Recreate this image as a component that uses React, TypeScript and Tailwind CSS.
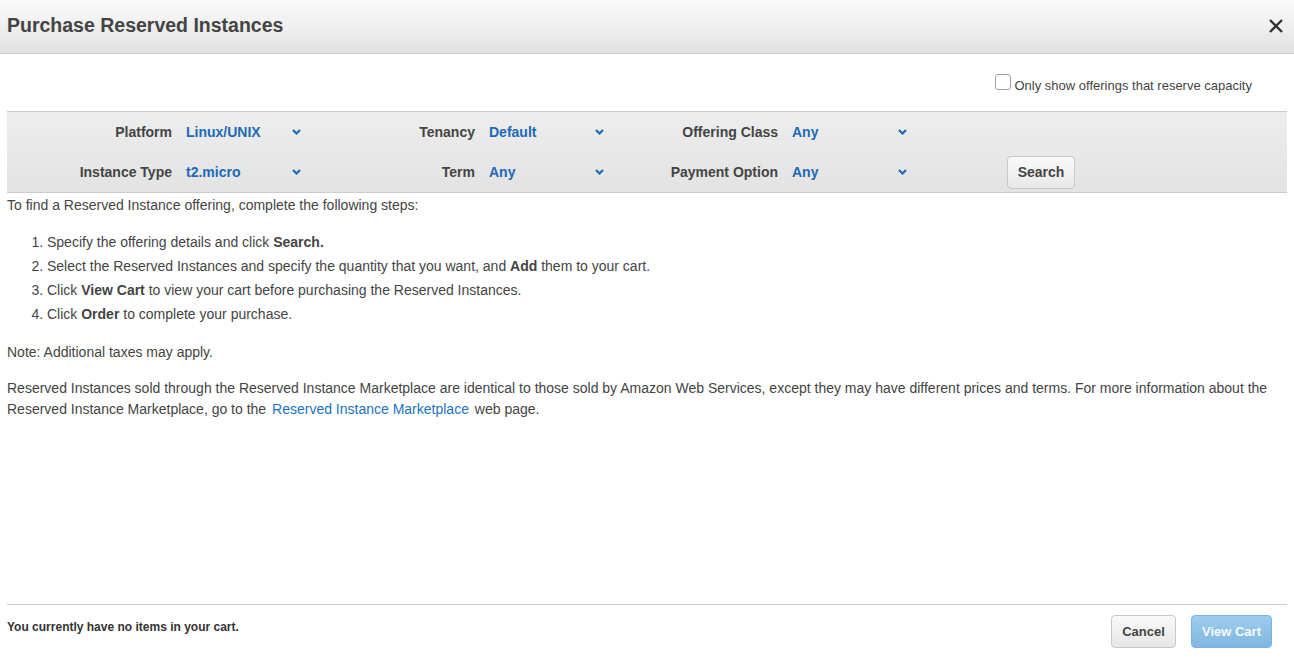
import React from "react";

function Chevron() {
  return (
    <svg width="9" height="6" viewBox="0 0 9 6" className="shrink-0">
      <polyline points="1,1 4.5,4.5 8,1" fill="none" stroke="#1a6ab8" strokeWidth="2.2" />
    </svg>
  );
}

function Field({ label, value }: { label: string; value: string }) {
  return (
    <div className="w-[303px] flex items-center shrink-0">
      <div className="w-[165px] text-right font-bold text-[#444]">{label}</div>
      <div className="ml-[14px] w-[115px] flex items-center justify-between">
        <span className="font-bold text-[#1a6ab8]">{value}</span>
        <Chevron />
      </div>
    </div>
  );
}

export default function App() {
  return (
    <div className="w-[1294px] h-[661px] bg-white flex flex-col font-['Liberation_Sans',Arial,sans-serif] text-[14px] text-[#444] overflow-hidden">
      <div className="h-[54px] shrink-0 border-b border-[#cfcfcf] bg-gradient-to-b from-[#fbfbfb] to-[#e2e2e2] flex items-center justify-between pl-[7px] pr-[10px]">
        <h1 className="text-[19.5px] font-bold text-[#444] leading-none mb-[1px]">Purchase Reserved Instances</h1>
        <svg width="16" height="16" viewBox="0 0 16 16" className="mb-[1px]">
          <line x1="2" y1="2" x2="14" y2="14" stroke="#333" strokeWidth="2.4" />
          <line x1="14" y1="2" x2="2" y2="14" stroke="#333" strokeWidth="2.4" />
        </svg>
      </div>

      <div className="flex-1 px-[7px] flex flex-col">
        <div className="h-[57px] flex items-start justify-end pr-[35px] pt-[19px]">
          <label className="flex items-center gap-[4px] text-[13px] text-[#444]">
            <span className="w-[16px] h-[16px] border border-[#a0a0a0] rounded-[3px] bg-white mb-[4px]" />
            <span className="mt-[3px]">Only show offerings that reserve capacity</span>
          </label>
        </div>

        <div className="border-t border-b border-[#cccccc] bg-gradient-to-b from-[#ededed] to-[#e3e3e3] flex flex-col">
          <div className="h-[40px] flex items-center">
            <Field label="Platform" value="Linux/UNIX" />
            <Field label="Tenancy" value="Default" />
            <Field label="Offering Class" value="Any" />
          </div>
          <div className="h-[40px] flex items-center">
            <Field label="Instance Type" value="t2.micro" />
            <Field label="Term" value="Any" />
            <Field label="Payment Option" value="Any" />
            <button className="ml-[91px] w-[68px] h-[33px] rounded-[4px] border border-[#c8c8c8] bg-gradient-to-b from-[#fafafa] to-[#e8e8e8] font-bold text-[#444] text-[14px]">
              Search
            </button>
          </div>
        </div>

        <p className="mt-[2px] leading-[20px]">To find a Reserved Instance offering, complete the following steps:</p>
        <ol className="list-decimal pl-[40px] mt-[15px] leading-[24px]">
          <li>Specify the offering details and click <b>Search.</b></li>
          <li>Select the Reserved Instances and specify the quantity that you want, and <b>Add</b> them to your cart.</li>
          <li>Click <b>View Cart</b> to view your cart before purchasing the Reserved Instances.</li>
          <li>Click <b>Order</b> to complete your purchase.</li>
        </ol>
        <p className="mt-[16px] leading-[20px]">Note: Additional taxes may apply.</p>
        <p className="mt-[16px] leading-[21px]">
          <span>Reserved Instances sold through the Reserved Instance Marketplace are identical to those sold by Amazon Web Services, except they may have different prices and terms. For more information about the</span>{" "}
          <span>Reserved Instance Marketplace, go to the</span>{" "}
          <a className="text-[#1a73c5] ml-[2px] mr-[2px]">Reserved Instance Marketplace</a>{" "}
          <span>web page.</span>
        </p>
      </div>

      <div className="mx-[7px] h-[57px] shrink-0 border-t border-[#cccccc] flex items-start justify-between">
        <div className="text-[12px] font-bold text-[#333] mt-[13px]">You currently have no items in your cart.</div>
        <div className="flex gap-[15px] mt-[10px] pr-[15px]">
          <button className="w-[65px] h-[33px] rounded-[4px] border border-[#c8c8c8] bg-gradient-to-b from-[#fafafa] to-[#e6e6e6] font-bold text-[#444] text-[13px]">
            Cancel
          </button>
          <button className="w-[81px] h-[33px] rounded-[4px] border border-[#7fb2dc] bg-gradient-to-b from-[#9dcdee] to-[#80b6e0] font-bold text-white/90 text-[13px]">
            View Cart
          </button>
        </div>
      </div>
    </div>
  );
}
